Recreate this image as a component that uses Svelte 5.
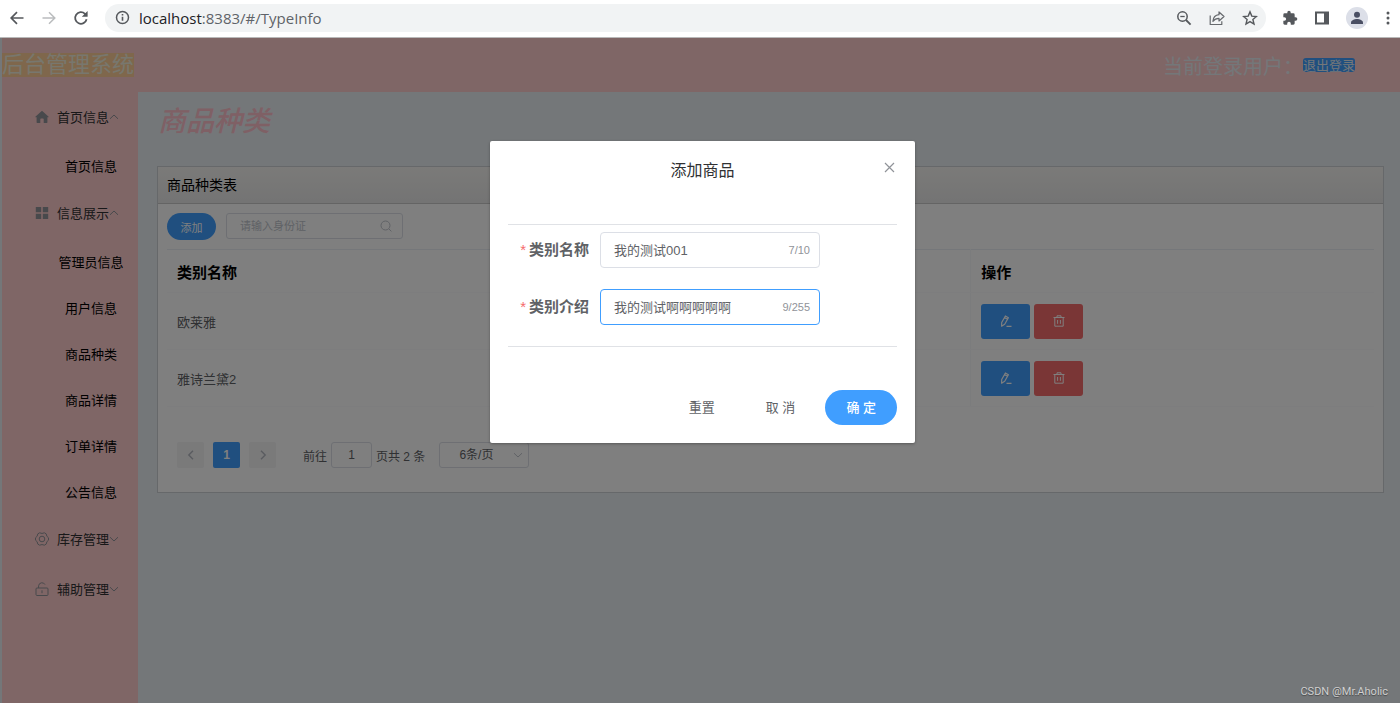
<script>
  const menu = [
    { icon: 'home', title: '首页信息', open: true, items: ['首页信息'] },
    {
      icon: 'grid',
      title: '信息展示',
      open: true,
      items: ['管理员信息', '用户信息', '商品种类', '商品详情', '订单详情', '公告信息']
    },
    { icon: 'gear', title: '库存管理', open: false, items: [] },
    { icon: 'lock', title: '辅助管理', open: false, items: [] }
  ];

  const rows = ['欧莱雅', '雅诗兰黛2'];

  let name = $state('我的测试001');
  let intro = $state('我的测试啊啊啊啊啊');
</script>

<div class="window">
  <div class="browser">
    <button class="tool" aria-label="Back">
      <svg width="16" height="16" viewBox="0 0 16 16" fill="none" stroke="#55585c" stroke-width="1.7"><path d="M14.5 8H2.5M8 2.2 2.2 8 8 13.8" /></svg>
    </button>
    <button class="tool" aria-label="Forward">
      <svg width="16" height="16" viewBox="0 0 16 16" fill="none" stroke="#babcbe" stroke-width="1.5"><path d="M1.5 8h12M8 2.2 13.8 8 8 13.8" /></svg>
    </button>
    <button class="tool" aria-label="Reload">
      <svg width="16" height="16" viewBox="0 0 16 16"><path d="M13.6 9.3A5.8 5.8 0 1 1 12 3.8l1.2 1.2" fill="none" stroke="#55585c" stroke-width="1.8" /><path d="M14.6 1v5.8H8.8z" fill="#55585c" /></svg>
    </button>
    <div class="address">
      <svg width="15" height="15" viewBox="0 0 15 15"><circle cx="7.5" cy="7.5" r="6" fill="none" stroke="#55585c" stroke-width="1.5" /><path d="M7.5 6.8v4M7.5 4v1.6" stroke="#55585c" stroke-width="1.6" /></svg>
      <span class="url"><b>localhost</b>:8383/#/TypeInfo</span>
      <button class="tool" aria-label="Zoom">
        <svg width="16" height="16" viewBox="0 0 16 16" fill="none" stroke="#55585c"><circle cx="6.5" cy="6.5" r="4.7" stroke-width="1.5" /><path d="M4.3 6.5h4.4" stroke-width="1.3" /><path d="m10 10 4.6 4.6" stroke-width="1.8" /></svg>
      </button>
      <button class="tool" aria-label="Share">
        <svg width="16" height="16" viewBox="0 0 16 16" fill="none" stroke="#66696d" stroke-width="1.2" stroke-linejoin="round"><path d="M1.2 5.5v9h11.6v-3.2" /><path d="M10 2v2.7C6.6 5 4.3 7 3.9 11.3 5.6 9 7.3 8.3 10 8.3V11l5-4.5z" /></svg>
      </button>
      <button class="tool" aria-label="Bookmark">
        <svg width="16" height="16" viewBox="0 0 16 16" fill="none" stroke="#55585c" stroke-width="1.4"><path d="m8 1.9 1.8 4.2 4.6.4-3.5 3 1.1 4.5L8 11.6 4 14l1.1-4.5-3.5-3 4.6-.4z" /></svg>
      </button>
    </div>
    <button class="tool" aria-label="Extensions">
      <svg width="16" height="16" viewBox="0 0 24 24" fill="#55585c"><path d="M20.5 11H19V7a2 2 0 0 0-2-2h-4V3.5a2.5 2.5 0 0 0-5 0V5H4a2 2 0 0 0-2 2v3.800h1.500a2.700 2.700 0 0 1 0 5.400H2V20c0 1.100.9 2 2 2h3.800v-1.500a2.700 2.700 0 0 1 5.400 0V22H17a2 2 0 0 0 2-2v-4h1.500a2.500 2.500 0 0 0 0-5z" /></svg>
    </button>
    <button class="tool" aria-label="Side panel">
      <svg width="16" height="16" viewBox="0 0 16 16"><path d="M1 1.500h14v13H1zM3 3.500v9h7v-9z" fill="#55585c" fill-rule="evenodd" /></svg>
    </button>
    <button class="tool avatar" aria-label="Profile">
      <svg width="22" height="22" viewBox="0 0 22 22"><circle cx="11" cy="11" r="11" fill="#dcdfe8" /><circle cx="11" cy="7.800" r="3" fill="#4a4f63" /><path d="M5 17v-1.600c0-2.300 3.500-3.500 6-3.500s6 1.200 6 3.500V17z" fill="#4a4f63" /></svg>
    </button>
    <button class="tool more" aria-label="More">
      <svg width="4" height="16" viewBox="0 0 4 16" fill="#55585c"><circle cx="2" cy="3" r="1.500" /><circle cx="2" cy="8" r="1.500" /><circle cx="2" cy="13" r="1.500" /></svg>
    </button>
  </div>

  <div class="page">
    <header class="top">
      <span class="logo">后台管理系统</span>
      <span class="user">当前登录用户：<button class="logout">退出登录</button></span>
    </header>

    <div class="body">
      <nav>
        {#each menu as group}
          <button class="group">
            {#if group.icon === 'home'}
              <svg class="gi" viewBox="0 0 14 14"><path d="M7 .8.6 6.400c-.5.500-.2.900.2.900h.8v5.200c0 .3.200.5.500.5h3.200V9.200c0-.4.300-.7.700-.7h2c.4 0 .7.300.7.700V13h3.200c.3 0 .5-.2.500-.5V7.300h.8c.5 0 .7-.5.2-.9z" fill="#909399" /></svg>
            {:else if group.icon === 'grid'}
              <svg class="gi" viewBox="0 0 14 14" fill="#909399"><path d="M.8 1h5.400v5.200H.8zM7.800 1h5.400v5.200H7.800zM.8 7.800h5.400V13H.8zM7.800 7.800h5.400V13H7.800z" /></svg>
            {:else if group.icon === 'gear'}
              <svg class="gi" viewBox="0 0 14 14" fill="none" stroke="#909399" stroke-width="1"><path d="M4.600.8Q7 2.100 9.400.8L11.200 1.900Q11.400 4.700 13.500 5.800v2.400Q11.400 9.300 11.200 12.100L9.400 13.200Q7 11.900 4.600 13.200L2.800 12.100Q2.600 9.300.5 8.200V5.800Q2.600 4.700 2.800 1.900z" /><circle cx="7" cy="7" r="2.800" /></svg>
            {:else}
              <svg class="gi" viewBox="0 0 14 14" fill="none" stroke="#909399" stroke-width="1"><rect x="1" y="6" width="12" height="7.500" rx="1" /><path d="M3.600 6V3.800A3.400 3.400 0 0 1 10 2.600M7 8.300v2.900" /></svg>
            {/if}
            <span>{group.title}</span>
            <svg class="caret" class:closed={!group.open} viewBox="0 0 10 10" fill="none" stroke="#909399" stroke-width="1"><path d="M1 6.800 5 3l4 3.800" /></svg>
          </button>
          {#each group.items as item}
            <a class="item" href="#/">{item}</a>
          {/each}
        {/each}
      </nav>

      <main>
        <h1>商品种类</h1>
        <section class="card">
          <div class="card-head">商品种类表</div>
          <div class="card-body">
            <div class="bar">
              <button class="add">添加</button>
              <label class="search">
                <input type="text" placeholder="请输入身份证" aria-label="请输入身份证" />
                <svg width="12" height="12" viewBox="0 0 12 12" fill="none" stroke="#c0c4cc" stroke-width="1"><circle cx="5.500" cy="5.500" r="4.500" /><path d="m9 9 2.400 2.400" /></svg>
              </label>
            </div>
            <table>
              <thead>
                <tr><th class="name">类别名称</th><th>操作</th></tr>
              </thead>
              <tbody>
                {#each rows as row}
                  <tr>
                    <td>{row}</td>
                    <td>
                      <div class="actions">
                        <button class="edit" aria-label="编辑">
                          <svg width="12" height="12" viewBox="0 0 12 12" fill="none" stroke="#fff" stroke-width="1.200" stroke-linejoin="round"><path d="M5.400 1 8.400 2.700 4.700 9.200 1.600 11.200 1.700 7.500zM4.600 2.600l2.900 1.700M6.500 11.300h5" /></svg>
                        </button>
                        <button class="del" aria-label="删除">
                          <svg width="12" height="12" viewBox="0 0 12 12" fill="none" stroke="#fff" stroke-width="1"><path d="M.5 2.500h11M4 2.300V.8h4v1.500M1.800 2.500v8.700h8.400V2.500M4.600 5v3.800M7.400 5v3.800" /></svg>
                        </button>
                      </div>
                    </td>
                  </tr>
                {/each}
              </tbody>
            </table>
            <div class="pager">
              <button class="pg" aria-label="上一页"><svg width="10" height="10" viewBox="0 0 10 10" fill="none" stroke="#b4b8c0" stroke-width="1.400"><path d="M7 .8 2.800 5 7 9.200" /></svg></button>
              <button class="pg on">1</button>
              <button class="pg" aria-label="下一页"><svg width="10" height="10" viewBox="0 0 10 10" fill="none" stroke="#b4b8c0" stroke-width="1.400"><path d="M3 .8 7.200 5 3 9.200" /></svg></button>
              <label class="jump">前往<input type="text" value="1" />页</label><span class="total">共 2 条</span>
              <div class="size">
                <select aria-label="每页条数"><option>6条/页</option></select>
                <svg width="10" height="10" viewBox="0 0 10 10" fill="none" stroke="#c0c4cc" stroke-width="1"><path d="M1 3.200 5 7l4-3.800" /></svg>
              </div>
            </div>
          </div>
        </section>
      </main>
    </div>

    <div class="mask">
      <form class="dialog" role="dialog" aria-label="添加商品" onsubmit={(e) => e.preventDefault()}>
        <div class="dialog-head">
          <h2>添加商品</h2>
          <button type="button" class="close" aria-label="关闭"><svg width="11" height="11" viewBox="0 0 11 11" stroke="#909399" stroke-width="1.200"><path d="m1 1 9 9M10 1l-9 9" /></svg></button>
        </div>
        <div class="fields">
          <div class="field">
            <label for="name"><i>*</i>类别名称</label>
            <div class="box">
              <input id="name" type="text" maxlength="10" bind:value={name} />
              <span>{name.length}/10</span>
            </div>
          </div>
          <div class="field">
            <label for="intro"><i>*</i>类别介绍</label>
            <div class="box active">
              <input id="intro" type="text" maxlength="255" bind:value={intro} />
              <span>{intro.length}/255</span>
            </div>
          </div>
        </div>
        <div class="buttons">
          <button type="reset">重置</button>
          <button type="button">取 消</button>
          <button type="submit" class="primary">确 定</button>
        </div>
      </form>
      <span class="mark">CSDN @Mr.Aholic</span>
    </div>
  </div>
</div>

<style>
  :global(body) {
    margin: 0;
  }
  .window,
  .window * {
    box-sizing: border-box;
  }
  .window {
    min-height: 100vh;
    display: flex;
    flex-direction: column;
    font-family: 'Liberation Sans', 'Noto Sans CJK SC', sans-serif;
    font-size: 13px;
    color: #606266;
  }
  button,
  input,
  select {
    font: inherit;
    color: inherit;
    margin: 0;
    padding: 0;
    border: 0;
    background: none;
  }
  input,
  select {
    outline: 0;
    min-width: 0;
  }
  svg {
    display: block;
    flex: none;
  }

  .browser {
    height: 38px;
    flex: none;
    display: flex;
    align-items: center;
    gap: 16px;
    padding: 0 10px 2px 9px;
    background: #fff;
    border-bottom: 1px solid #b9b9b9;
  }
  .tool {
    display: flex;
    justify-content: center;
  }
  .avatar {
    margin-right: 2px;
  }
  .address {
    flex: 1;
    height: 28px;
    display: flex;
    align-items: center;
    gap: 17px;
    padding: 0 8px 0 10px;
    border-radius: 14px;
    background: #f1f3f4;
  }
  .url {
    flex: 1;
    margin-left: -8px;
    font-family: 'Open Sans', sans-serif;
    font-size: 15px;
    line-height: 20px;
    color: #5f6368;
  }
  .url b {
    font-weight: 400;
    color: #202124;
  }

  .page {
    position: relative;
    flex: 1;
    display: flex;
    flex-direction: column;
    padding-left: 2px;
    background: #e9eef3;
  }
  .top {
    height: 54px;
    display: flex;
    align-items: center;
    justify-content: space-between;
    padding-right: 45px;
    background: #ffcccc;
  }
  .logo {
    font-size: 22px;
    line-height: 24px;
    color: #f0eedc;
    background: #ffcf98;
  }
  .user {
    display: flex;
    align-items: center;
    font-size: 20px;
    color: #e9eef3;
  }
  .logout {
    height: 14px;
    border-radius: 3px;
    background: #409eff;
    color: #e9eef3;
    font-size: 13px;
    line-height: 13px;
  }
  .body {
    flex: 1;
    display: flex;
  }
  nav {
    width: 136px;
    background: #ffcccc;
    display: flex;
    flex-direction: column;
  }
  .group {
    height: 50px;
    display: flex;
    align-items: center;
    padding-left: 33px;
    color: #303133;
  }
  .group span {
    padding-bottom: 2px;
  }
  .gi {
    width: 14px;
    height: 14px;
    margin-right: 8px;
  }
  .caret {
    width: 10px;
    height: 10px;
  }
  .caret.closed {
    transform: rotate(180deg);
  }
  .item {
    height: 46px;
    display: flex;
    align-items: center;
    justify-content: center;
    padding-left: 42px;
    color: #000;
    text-decoration: none;
  }

  main {
    flex: 1;
    padding: 10px 16px 0 19px;
  }
  h1 {
    margin: 0 0 24px 1px;
    font-size: 28px;
    line-height: 40px;
    font-weight: 500;
    font-style: italic;
    color: #ffc0cb;
  }
  .card {
    border: 1px solid #cdd0d4;
    background: #fff;
  }
  .card-head {
    height: 37px;
    padding: 0 9px;
    line-height: 37px;
    font-size: 14px;
    color: #000;
    background: linear-gradient(#f6f5f2, #e8e8e8);
    border-bottom: 1px solid #c8c8c8;
  }
  .card-body {
    padding: 9px 9px 24px;
  }
  .bar {
    display: flex;
    gap: 10px;
    margin-bottom: 9px;
  }
  .add {
    width: 49px;
    height: 27px;
    border-radius: 14px;
    background: #409eff;
    color: #fff;
    font-size: 11px;
  }
  .search {
    width: 177px;
    height: 26px;
    display: flex;
    align-items: center;
    padding: 0 10px 0 13px;
    border: 1px solid #dcdfe6;
    border-radius: 3px;
    font-size: 11px;
  }
  .search input {
    flex: 1;
  }
  .search input::placeholder {
    color: #c0c4cc;
    opacity: 1;
  }

  table {
    width: 100%;
    table-layout: fixed;
    border-collapse: collapse;
  }
  th,
  td {
    padding: 0 10px;
    text-align: left;
    border-bottom: 1px solid #fafafc;
  }
  th {
    height: 43px;
    border-top: 1px solid #ebeef5;
    font-size: 15px;
    color: #000;
  }
  td {
    height: 57px;
  }
  .name {
    width: 66.6%;
  }
  th:first-child,
  td:first-child {
    border-right: 1px solid #f7f8fb;
  }
  .actions {
    display: flex;
    gap: 4px;
  }
  .actions button {
    width: 49px;
    height: 35px;
    display: flex;
    align-items: center;
    justify-content: center;
    border-radius: 3px;
  }
  .edit {
    background: #409eff;
  }
  .del {
    background: #f56c6c;
  }

  .pager {
    display: flex;
    align-items: center;
    margin-top: 35px;
    padding-left: 10px;
    font-size: 12px;
  }
  .pg {
    width: 27px;
    height: 26px;
    margin-right: 9px;
    display: flex;
    align-items: center;
    justify-content: center;
    border-radius: 2px;
    background: #f4f4f5;
  }
  .pg.on {
    background: #409eff;
    color: #fff;
    font-weight: 700;
  }
  .jump {
    display: flex;
    align-items: center;
    margin-left: 18px;
  }
  .jump input {
    width: 41px;
    height: 26px;
    margin: 0 4px;
    border: 1px solid #dcdfe6;
    border-radius: 3px;
    text-align: center;
  }
  .size {
    width: 90px;
    height: 26px;
    display: flex;
    align-items: center;
    margin-left: 14px;
    padding: 0 5px 0 19px;
    border: 1px solid #dcdfe6;
    border-radius: 3px;
  }
  .size select {
    flex: 1;
    appearance: none;
  }

  .mask {
    position: absolute;
    inset: 0;
    display: flex;
    align-items: flex-start;
    justify-content: center;
    padding: 103px 0 0 5px;
    background: rgba(0, 0, 0, 0.5);
  }
  .dialog {
    width: 425px;
    max-width: 100%;
    padding: 18px;
    border-radius: 2px;
    background: #fff;
    box-shadow: 0 1px 3px rgba(0, 0, 0, 0.3);
  }
  .dialog-head {
    position: relative;
    height: 65px;
  }
  h2 {
    margin: 0;
    text-align: center;
    font-size: 16px;
    line-height: 24px;
    font-weight: 400;
    color: #303133;
  }
  .close {
    position: absolute;
    top: 3px;
    right: 2px;
  }
  .fields {
    display: flex;
    flex-direction: column;
    gap: 21px;
    padding: 7px 0 21px;
    border: solid #e0e2e6;
    border-width: 1px 0;
  }
  .field {
    display: flex;
    align-items: center;
  }
  .field label {
    width: 92px;
    padding: 0 11px 3px 0;
    text-align: right;
    font-size: 15px;
    font-weight: 700;
    white-space: nowrap;
  }
  .field i {
    margin-right: 3px;
    color: #f56c6c;
    font-style: normal;
    font-weight: 400;
  }
  .box {
    width: 220px;
    height: 36px;
    display: flex;
    align-items: center;
    padding: 0 9px 0 13px;
    border: 1px solid #dcdfe6;
    border-radius: 4px;
  }
  .box.active {
    border-color: #409eff;
  }
  .box input {
    flex: 1;
    padding-bottom: 2px;
  }
  .box span {
    font-size: 11px;
    color: #909399;
  }
  .buttons {
    display: flex;
    justify-content: flex-end;
    gap: 9px;
    margin-top: 43px;
  }
  .buttons button {
    height: 35px;
    padding: 0 21px 2px;
    border-radius: 18px;
  }
  .buttons .primary {
    background: #409eff;
    color: #fff;
    font-weight: 500;
  }
  .mark {
    position: absolute;
    right: 12px;
    bottom: 5px;
    font-family: Roboto, sans-serif;
    font-size: 11px;
    color: #d0d0d0;
    text-shadow: 0 1px 1px rgba(0, 0, 0, 0.4);
  }
</style>
